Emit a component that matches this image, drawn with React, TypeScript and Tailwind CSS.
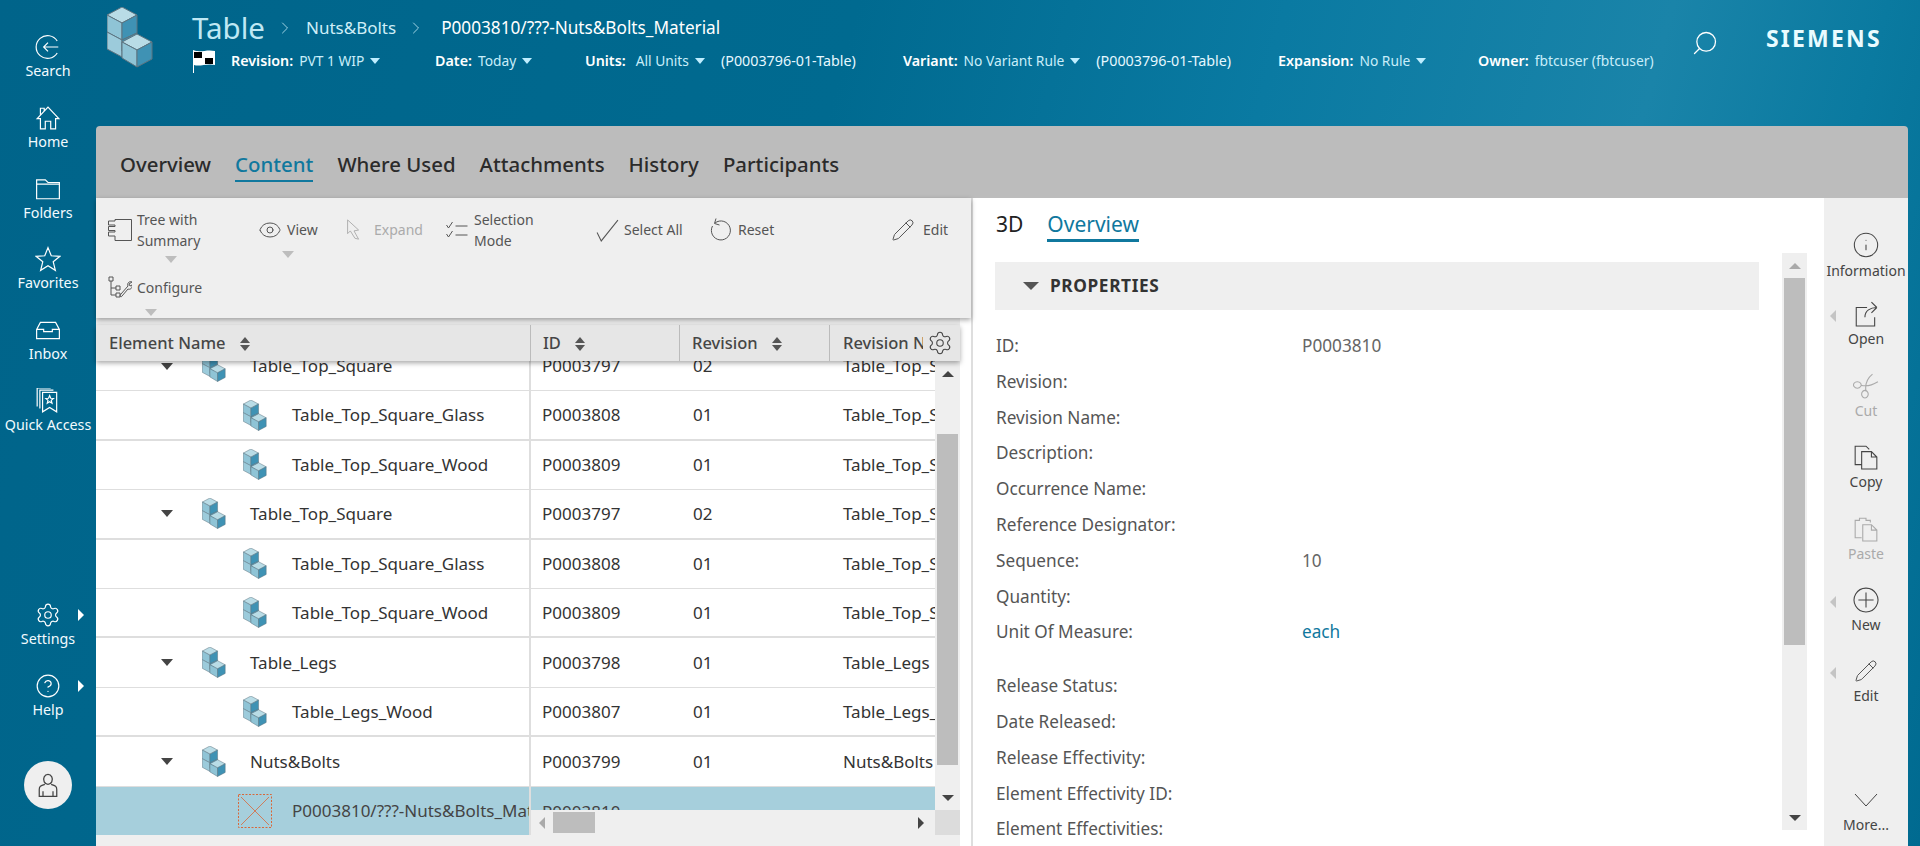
import React from "react";
import { Settings, CircleHelp, ChevronRight, Search, Pencil, Eye, Info } from "lucide-react";

const Cubes = ({ className }: { className?: string }) => (
  <svg viewBox="0 0 46 61" className={className}>
    <g stroke="#5d7480" strokeWidth="1" strokeLinejoin="round">
      <path d="M0 8L15 0L30 8L15 16Z" fill="#b9dce6" />
      <path d="M0 8L15 16V33L0 25Z" fill="#8fc4d6" />
      <path d="M15 16L30 8V26L15 33Z" fill="#3f92b4" />
      <path d="M0 25L15 33V50L0 42Z" fill="#9ccbdb" />
      <path d="M15 33L30 26V36L15 44Z" fill="#3f92b4" />
      <path d="M15 35L30 27L45 35L30 43Z" fill="#b9dce6" />
      <path d="M15 35L30 43V60L15 51Z" fill="#8fc4d6" />
      <path d="M30 43L45 35V52L30 60Z" fill="#3f92b4" />
    </g>
  </svg>
);

const Line = ({ d, className, width = 1 }: { d: string; className?: string; width?: number }) => (
  <svg viewBox="0 0 24 24" fill="none" stroke="currentColor" strokeWidth={width} className={className}>
    <path d={d} />
  </svg>
);

const navIcons: Record<string, string> = {
  Search: "M20.5 6.5A10.5 10.5 0 1 0 20.5 17.5M21.5 12H8M12 8l-4 4 4 4",
  Home: "M2 12.5L12 2l10 10.5h-3V22h-4.5v-7h-5v7H5V12.5H2ZM5 9V3h3.5v2.5",
  Folders: "M1.5 21V3.5h8l2.5 2.5h10.5V21ZM1.5 7.5h21",
  Favorites: "M12 1.5l3 7.5 8 .5-6.200 5 2 8-6.800-4.300-6.800 4.300 2-8L1 9.500l8-.5Z",
  Inbox: "M1.5 11.500L5 5h14l3.500 6.500V20h-21ZM1.500 11.500H8v2h8v-2h6.500",
  "Quick Access": "M7 4h13v18l-6.500-4L7 22ZM4.500 19V2H17M2 17V0h12.500M13.500 7l1 2.500 2.500.2-2 1.700.7 2.600-2.200-1.400-2.200 1.400.7-2.600-2-1.700 2.500-.2Z",
};

function NavItem({ label }: { label: string }) {
  return (
    <div className="h-[70.8px] flex flex-col items-center text-white">
      <Line d={navIcons[label]} width={1.1} className="w-[26px] h-[26px] my-[2px]" />
      <span className="text-[14.3px] leading-[20px] -mt-[1px] text-[#f2fbff] whitespace-nowrap">{label}</span>
    </div>
  );
}

function MenuItem({ label, children }: { label: string; children: React.ReactNode }) {
  return (
    <div className="relative h-[70.8px] flex flex-col items-center text-white">
      {children}
      <span className="text-[14.3px] leading-[20px] -mt-[1px] text-[#f2fbff]">{label}</span>
      <span className="absolute left-[78px] top-[9px] border-y-[6px] border-y-transparent border-l-[6px] border-l-white" />
    </div>
  );
}

function Sidebar() {
  return (
    <div className="w-[96px] shrink-0 flex flex-col items-stretch pt-[32px]">
      <NavItem label="Search" />
      <NavItem label="Home" />
      <NavItem label="Folders" />
      <NavItem label="Favorites" />
      <NavItem label="Inbox" />
      <NavItem label="Quick Access" />
      <div className="mt-[143px]">
        <MenuItem label="Settings">
          <Settings strokeWidth={1.1} className="w-[26px] h-[26px] my-[2px]" />
        </MenuItem>
        <MenuItem label="Help">
          <CircleHelp strokeWidth={1.1} className="w-[26px] h-[26px] my-[2px]" />
        </MenuItem>
      </div>
      <div className="mt-[20px] mx-auto w-[48px] h-[48px] rounded-full bg-[#efefef] flex items-center justify-center text-[#444]">
        <Line d="M12 3.500a3.500 4 0 1 1-.01 0M9.500 11.500C6 12.500 5 13 5 15.500V21h14v-5.500c0-2.500-1-3-4.500-4M8 21v-4M16 21v-4" className="w-[30px] h-[30px]" />
      </div>
    </div>
  );
}

const Tri = ({ className = "" }: { className?: string }) => (
  <span className={`inline-block border-x-[5px] border-x-transparent border-t-[6px] border-t-[#bfeeff] ${className}`} />
);

function Field({ width, label, value, extra, gap = "" }: { width: string; label: string; value: string; extra?: string; gap?: string }) {
  return (
    <div className={`flex items-center gap-[6px] shrink-0 text-[14.3px] leading-[20px] whitespace-nowrap ${width}`}>
      <span className="font-semibold text-white">{label}</span>
      <span className={`text-[13.8px] text-[#c9eefa] ${gap}`}>{value}</span>
      {value !== "fbtcuser (fbtcuser)" && <Tri />}
      {extra && <span className="ml-[10px] text-[#e6f8ff]">{extra}</span>}
    </div>
  );
}

function Header() {
  return (
    <div className="h-[126px] flex items-start pl-[11px] shrink-0">
      <Cubes className="w-[46px] h-[61px] mt-[7px] shrink-0" />
      <div className="ml-[39px] w-[1497px] shrink-0 pt-[8px]">
        <div className="flex items-center h-[40px] whitespace-nowrap">
          <span className="text-[29.5px] leading-[40px] text-[#bfe8f4]">Table</span>
          <ChevronRight strokeWidth={1} className="w-[20px] h-[20px] ml-[10px] text-[#bfe8f4]" />
          <span className="text-[17px] ml-[11px] text-[#cfeff8]">Nuts&amp;Bolts</span>
          <ChevronRight strokeWidth={1} className="w-[20px] h-[20px] ml-[10px] text-[#bfe8f4]" />
          <span className="text-[17.2px] ml-[15px] text-white">P0003810/???-Nuts&amp;Bolts_Material</span>
        </div>
        <div className="flex items-center h-[26px]">
          <svg viewBox="0 0 24 24" className="w-[24px] h-[24px] shrink-0 mr-[15px]">
            <path d="M1 1c7 3 14-1 22 1v14c-8-2-15 2-21 0v8H1Z" fill="#fff" />
            <path d="M2 3h8v6H2ZM13 9h8v6h-8Z" fill="#000" />
          </svg>
          <Field width="w-[204px]" label="Revision:" value="PVT 1 WIP" />
          <Field width="w-[150px]" label="Date:" value="Today" />
          <Field width="w-[318px]" label="Units:" value="All Units" extra="(P0003796-01-Table)" gap="ml-[4px]" />
          <Field width="w-[375px]" label="Variant:" value="No Variant Rule" extra="(P0003796-01-Table)" />
          <Field width="w-[200px]" label="Expansion:" value="No Rule" />
          <Field width="w-[175px]" label="Owner:" value="fbtcuser (fbtcuser)" />
        </div>
      </div>
      <Search strokeWidth={1.1} className="w-[28px] h-[28px] mt-[29px] ml-[2px] shrink-0 text-white -scale-x-100" />
      <span className="ml-[47px] mt-[23px] text-[23px] leading-[30px] font-bold tracking-[2.2px] text-[#e9fbff]">SIEMENS</span>
    </div>
  );
}

function Tabs() {
  const tabs = ["Overview", "Content", "Where Used", "Attachments", "History", "Participants"];
  return (
    <div className="h-[72px] bg-[#bcbcbc] rounded-t-[4px] flex gap-[24px] pl-[24px] shrink-0">
      {tabs.map((t) => (
        <div key={t} className={`mt-[24px] h-[32px] text-[20.4px] leading-[29px] font-medium whitespace-nowrap ${t === "Content" ? "text-[#10789e] border-b-2 border-[#10789e]" : "text-[#2b2b2b]"}`}>
          {t}
        </div>
      ))}
    </div>
  );
}

const Caret = ({ className = "" }: { className?: string }) => (
  <span className={`absolute border-x-[6px] border-x-transparent border-t-[7px] border-t-[#bdbdbd] ${className}`} />
);

function Toolbar() {
  return (
    <div className="h-[120px] bg-[#efefef] text-[14px] leading-[20px] text-[#555] shrink-0 shadow-[0_2px_5px_rgba(0,0,0,0.35)] relative z-20">
      <div className="flex items-center h-[64px] relative">
        <div className="w-[150px] ml-[12px] flex items-center gap-[5px] relative">
          <Line d="M7 1.500h16.500v21H7V18H.5v-4H7v-1.500H.5v-4H7V7H.5V3H7Z" className="w-[24px] h-[24px]" />
          <span className="leading-[21px]">Tree with<br />Summary</span>
          <Caret className="left-[57px] top-[47px]" />
        </div>
        <div className="w-[85px] flex items-center gap-[5px] relative">
          <Eye strokeWidth={1} className="w-[24px] h-[24px]" />
          <span>View</span>
          <Caret className="left-[24px] top-[33px]" />
        </div>
        <div className="w-[102px] flex items-center gap-[9px] text-[#ababab]">
          <Line d="M5 1l12 11-5 1 5 9-4-1-5-8-3 3Z" className="w-[22px] h-[24px]" />
          <span>Expand</span>
        </div>
        <div className="w-[150px] flex items-center gap-[4px]">
          <Line d="M1 7l2 3 4-6M10 8h12M1 16l2 3 4-6M10 17h12" className="w-[25px] h-[24px]" />
          <span className="leading-[21px]">Selection<br />Mode</span>
        </div>
        <div className="w-[113px] flex items-center gap-[4px]">
          <Line d="M2 14l4 8L22 2" className="w-[25px] h-[25px]" />
          <span>Select All</span>
        </div>
        <div className="w-[183px] flex items-center gap-[6px]">
          <Line d="M7 5a9.500 9.500 0 1 1-2.500 3M8 .5L6.500 5.500l5 1.500" className="w-[24px] h-[24px]" />
          <span>Reset</span>
        </div>
        <div className="flex items-center gap-[8px]">
          <Pencil strokeWidth={1} className="w-[24px] h-[24px]" />
          <span>Edit</span>
        </div>
      </div>
      <div className="flex items-center ml-[12px] gap-[5px] h-[44px] relative mt-[4px]">
        <Line d="M1 1h4v4H1ZM3 5v14h5M3 12h5M8 10h4v4H8ZM8 17h4v4H8ZM13 18l7-8c-1-3 1-5 4-4l-3 2 1 2 2-1c1 3-2 5-4 4l-6 7c-1 2-3 0-1-2Z" className="w-[24px] h-[26px]" />
        <span>Configure</span>
        <Caret className="left-[37px] top-[43px]" />
      </div>
    </div>
  );
}

function SortArrows() {
  return (
    <span className="inline-flex flex-col gap-[2px] ml-[14px] mt-[1px]">
      <span className="border-x-[5px] border-x-transparent border-b-[6px] border-b-[#555]" />
      <span className="border-x-[5px] border-x-transparent border-t-[6px] border-t-[#555]" />
    </span>
  );
}

function TableHead() {
  return (
    <div className="mt-[7px] h-[36px] bg-[#e6e6e6] text-[16.5px] text-[#464646] font-medium flex items-center relative z-10 shadow-[0_2px_5px_rgba(0,0,0,0.35)] shrink-0 whitespace-nowrap">
      <div className="w-[435px] pl-[13px] h-full flex items-center border-r border-[#bbb]">
        Element Name <SortArrows />
      </div>
      <div className="w-[149px] pl-[12px] h-full flex items-center border-r border-[#bbb]">
        ID <SortArrows />
      </div>
      <div className="w-[150px] pl-[12px] h-full flex items-center border-r border-[#bbb]">
        Revision <SortArrows />
      </div>
      <div className="w-[93px] pl-[13px] h-full flex items-center overflow-hidden">Revision Name</div>
      <Settings strokeWidth={1} className="w-[26px] h-[26px] ml-[4px] text-[#444]" />
    </div>
  );
}

type Row = { name: string; id: string; rev: string; revName: string; child: boolean; thick?: boolean };

const rows: Row[] = [
  { name: "Table_Top_Square", id: "P0003797", rev: "02", revName: "Table_Top_Square", child: false },
  { name: "Table_Top_Square_Glass", id: "P0003808", rev: "01", revName: "Table_Top_Square", child: true, thick: true },
  { name: "Table_Top_Square_Wood", id: "P0003809", rev: "01", revName: "Table_Top_Square", child: true },
  { name: "Table_Top_Square", id: "P0003797", rev: "02", revName: "Table_Top_Square", child: false, thick: true },
  { name: "Table_Top_Square_Glass", id: "P0003808", rev: "01", revName: "Table_Top_Square", child: true },
  { name: "Table_Top_Square_Wood", id: "P0003809", rev: "01", revName: "Table_Top_Square", child: true, thick: true },
  { name: "Table_Legs", id: "P0003798", rev: "01", revName: "Table_Legs", child: false },
  { name: "Table_Legs_Wood", id: "P0003807", rev: "01", revName: "Table_Legs_Wood", child: true, thick: true },
  { name: "Nuts&Bolts", id: "P0003799", rev: "01", revName: "Nuts&Bolts", child: false },
];

function TreeRow({ row }: { row: Row }) {
  return (
    <div className={`h-[49.4px] flex items-center text-[17px] text-[#333] whitespace-nowrap border-[#dedede] ${row.thick ? "border-b-2" : "border-b"}`}>
      <div className={`w-[435px] h-full flex items-center border-r-2 border-[#dedede] ${row.child ? "pl-[147px]" : "pl-[65px]"}`}>
        {!row.child && <span className="border-x-[6px] border-x-transparent border-t-[7px] border-t-[#444] mr-[29px]" />}
        <Cubes className="w-[24px] h-[31px] shrink-0" />
        <span className={row.child ? "ml-[25px]" : "ml-[24px]"}>{row.name}</span>
      </div>
      <div className="w-[150px] pl-[11px]">{row.id}</div>
      <div className="w-[150px] pl-[12px]">{row.rev}</div>
      <div className="w-[104px] pl-[12px] overflow-hidden">{row.revName}</div>
    </div>
  );
}

function ScrollArrow({ dir, dark }: { dir: "up" | "down" | "left" | "right"; dark?: boolean }) {
  const color = dark ? "#444" : "#aaa";
  if (dir === "up") return <span className="border-x-[6px] border-x-transparent border-b-[6px]" style={{ borderBottomColor: color }} />;
  if (dir === "down") return <span className="border-x-[6px] border-x-transparent border-t-[6px]" style={{ borderTopColor: color }} />;
  if (dir === "left") return <span className="border-y-[6px] border-y-transparent border-r-[6px]" style={{ borderRightColor: color }} />;
  return <span className="border-y-[6px] border-y-transparent border-l-[6px]" style={{ borderLeftColor: color }} />;
}

function TreeTable() {
  return (
    <div className="h-[474px] flex relative overflow-hidden bg-white shrink-0">
      <div className="w-[839px] shrink-0">
        <div className="-mt-[19px]">
          {rows.map((r, i) => (
            <TreeRow key={i} row={r} />
          ))}
          <div className="h-[48px] bg-[#a6cfdc] flex items-center text-[17px] text-[#444] whitespace-nowrap">
            <div className="w-[435px] h-full pl-[142px] flex items-center overflow-hidden border-r-2 border-[#dedede]">
              <svg viewBox="0 0 34 34" className="w-[34px] h-[34px] shrink-0">
                <path d="M.5.5h33v33H.5Z" fill="none" stroke="#d8683a" strokeDasharray="2 1.5" />
                <path d="M3 3l28 28M31 3L3 31" stroke="#d8683a" strokeWidth="0.8" />
              </svg>
              <span className="ml-[20px]">P0003810/???-Nuts&amp;Bolts_Material</span>
            </div>
            <span className="pl-[11px] self-start pt-[12px]">P0003810</span>
          </div>
        </div>
      </div>
      <div className="w-[25px] shrink-0 bg-[#efefef] flex flex-col items-center">
        <div className="h-[24px] flex items-center justify-center pt-[1px]"><ScrollArrow dir="up" dark /></div>
        <div className="mt-[49px] h-[331px] w-[21px] bg-[#bdbdbd]" />
        <div className="mt-[21px] h-[24px] flex items-center justify-center"><ScrollArrow dir="down" dark /></div>
      </div>
      <div className="absolute left-[435px] bottom-0 w-[429px] h-[25px] bg-[#efefef] flex items-center">
        <span className="ml-[8px] flex"><ScrollArrow dir="left" /></span>
        <span className="ml-[8px] w-[42px] h-[21px] bg-[#bdbdbd]" />
        <span className="ml-[323px] flex"><ScrollArrow dir="right" dark /></span>
      </div>
      <div className="absolute right-0 bottom-0 w-[25px] h-[25px] bg-[#dcdcdc]" />
    </div>
  );
}

function LeftPanel() {
  return (
    <div className="w-[877px] shrink-0 flex flex-col border-r-2 border-[#dedede] bg-white">
      <Toolbar />
      <div className="w-[864px] flex flex-col flex-1 bg-[#efefef]">
        <TableHead />
        <TreeTable />
      </div>
    </div>
  );
}

const props: [string, string, boolean?][] = [
  ["ID:", "P0003810"],
  ["Revision:", ""],
  ["Revision Name:", ""],
  ["Description:", ""],
  ["Occurrence Name:", ""],
  ["Reference Designator:", ""],
  ["Sequence:", "10"],
  ["Quantity:", ""],
  ["Unit Of Measure:", "each", true],
];

const props2 = ["Release Status:", "Date Released:", "Release Effectivity:", "Element Effectivity ID:", "Element Effectivities:"];

function RightContent() {
  return (
    <div className="w-[851px] shrink-0 flex pl-[22px] overflow-hidden">
      <div className="w-[764px] shrink-0">
        <div className="flex gap-[24px] text-[21px] leading-[28px] h-[64px] pt-[12px] pl-[1px]">
          <span className="text-[#222]">3D</span>
          <span className="h-[32px] text-[#10789e] border-b-[3px] border-[#10789e]">Overview</span>
        </div>
        <div className="h-[48px] bg-[#efefef] flex items-center pl-[28px]">
          <span className="border-x-[8px] border-x-transparent border-t-[8px] border-t-[#555]" />
          <span className="ml-[11px] text-[17.3px] font-bold tracking-[0.6px] text-[#333]">PROPERTIES</span>
        </div>
        <div className="pt-[18px] pl-[1px] text-[17.2px] text-[#555]">
          {props.map(([label, value, link]) => (
            <div key={label} className="h-[35.8px] flex items-center">
              <span className="w-[306px] shrink-0">{label}</span>
              <span className={link ? "text-[#10789e]" : "text-[#666]"}>{value}</span>
            </div>
          ))}
          <div className="h-[18px]" />
          {props2.map((label) => (
            <div key={label} className="h-[35.8px] flex items-center">{label}</div>
          ))}
        </div>
      </div>
      <div className="ml-[23px] mt-[55px] w-[25px] h-[577px] shrink-0 bg-[#efefef] flex flex-col items-center">
        <div className="h-[25px] flex items-center justify-center"><ScrollArrow dir="up" /></div>
        <div className="w-[21px] h-[367px] bg-[#bdbdbd]" />
        <div className="mt-auto h-[25px] flex items-center justify-center"><ScrollArrow dir="down" dark /></div>
      </div>
    </div>
  );
}

function Cmd({ label, disabled, arrow, children }: { label: string; disabled?: boolean; arrow?: boolean; children: React.ReactNode }) {
  return (
    <div className={`relative h-[71.4px] flex flex-col items-center ${disabled ? "text-[#aaa]" : "text-[#444]"}`}>
      {children}
      <span className="text-[14px] leading-[20px] mt-[2px]">{label}</span>
      {arrow && <span className="absolute left-[6px] top-[9px] border-y-[6px] border-y-transparent border-r-[6px] border-r-[#c4c4c4]" />}
    </div>
  );
}

function CommandBar() {
  return (
    <div className="w-[84px] shrink-0 bg-[#efefef] pt-[32px] overflow-hidden">
      <Cmd label="Information">
        <Info strokeWidth={0.9} className="w-[28px] h-[28px] mt-[1px]" />
      </Cmd>
      <Cmd label="Open" arrow>
        <Line d="M13 6H3v17h17v-8M22 6l-5-5M22 6l-5 5M22 6c-6 0-11 3-11 9" className="w-[26px] h-[26px]" />
      </Cmd>
      <Cmd label="Cut" disabled>
        <Line d="M4 8a3.500 3 0 1 0 .01 0M11 16a3 3.500 0 1 0 .01 0M7 11c5 2 11 0 16-3M12 17c-1-6 1-12 6-16" className="w-[26px] h-[26px]" />
      </Cmd>
      <Cmd label="Copy">
        <Line d="M8 19H2V2h10l3 3M8 7h9l5 5v11H8ZM17 7v5h5" className="w-[26px] h-[26px]" />
      </Cmd>
      <Cmd label="Paste" disabled>
        <Line d="M8 20H2V4h4V2h6v2h4v2M9 8h8l5 5v10H9ZM17 8v5h5" className="w-[26px] h-[26px]" />
      </Cmd>
      <Cmd label="New" arrow>
        <Line d="M12 1a11 11 0 1 0 .01 0M12 5v14M5 12h14" className="w-[26px] h-[26px]" />
      </Cmd>
      <Cmd label="Edit" arrow>
        <Pencil strokeWidth={0.9} className="w-[24px] h-[26px]" />
      </Cmd>
      <div className="mt-[57px] flex flex-col items-center text-[#444]">
        <div className="h-[26px] flex items-center">
          <svg viewBox="0 0 24 14" fill="none" stroke="currentColor" strokeWidth="1" className="w-[24px] h-[14px]">
            <path d="M1 1l11 12L23 1" />
          </svg>
        </div>
        <span className="text-[14px] leading-[20px] mt-[2px]">More...</span>
      </div>
    </div>
  );
}

export default function App() {
  return (
    <div className="w-[1920px] h-[846px] overflow-hidden flex font-['Noto_Sans',sans-serif] bg-[linear-gradient(105deg,#00648a_0%,#006a90_40%,#0a7aa2_60%,#1a84a9_78%,#0a7aa0_88%,#006a90_100%)]">
      <Sidebar />
      <div className="w-[1812px] shrink-0 flex flex-col">
        <Header />
        <Tabs />
        <div className="flex h-[648px] bg-white">
          <LeftPanel />
          <RightContent />
          <CommandBar />
        </div>
      </div>
    </div>
  );
}
